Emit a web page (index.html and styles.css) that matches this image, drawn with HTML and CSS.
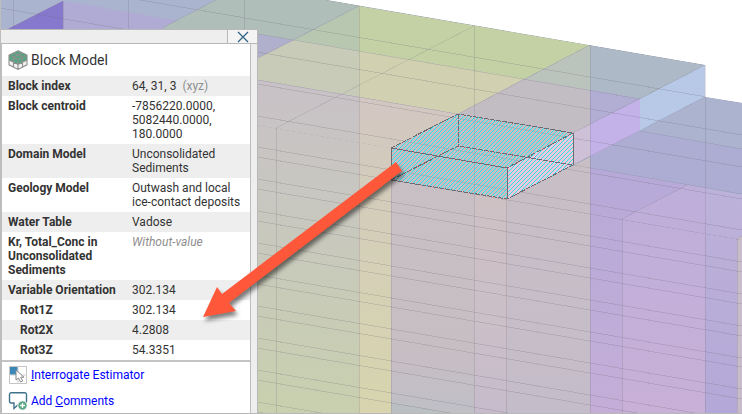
FILE: index.html
```
<!DOCTYPE html>
<html lang="en">
<head>
<meta charset="utf-8">
<meta name="viewport" content="width=device-width, initial-scale=1">
<title>Block Model</title>
<link rel="stylesheet" href="styles.css">
</head>
<body>
<main class="viewer">
<svg class="scene" viewBox="0 0 742 414" preserveAspectRatio="xMinYMin slice" aria-hidden="true">
  <defs>
    <clipPath id="model"><path d="M0-56L705 65V97L742 103V414H0Z"/></clipPath>
    <clipPath id="frontB"><path d="M0 81L506 168V199L742 240V414H0Z"/></clipPath>
    <linearGradient id="left" x1="0" y1="0" x2="0" y2="1"><stop offset="0" stop-color="#c8c1c7"/><stop offset=".35" stop-color="#c8c7c0"/><stop offset=".65" stop-color="#c8cbb8"/><stop offset="1" stop-color="#c8d0ae"/></linearGradient>
    <linearGradient id="sand" x1="0" y1="0" x2="0" y2="1"><stop offset="0" stop-color="#d2c7c2"/><stop offset=".55" stop-color="#d5d0b6"/><stop offset="1" stop-color="#d7d4ae"/></linearGradient>
    <linearGradient id="mauve" x1="0" y1="0" x2="0" y2="1"><stop offset="0" stop-color="#c9c0c6"/><stop offset=".8" stop-color="#c7bec4"/><stop offset="1" stop-color="#bfbfc6"/></linearGradient>
    <linearGradient id="rose" x1="0" y1="0" x2="0" y2="1"><stop offset="0" stop-color="#cec1c4"/><stop offset=".6" stop-color="#cbbfc8"/><stop offset="1" stop-color="#c6bbcb"/></linearGradient>
    <linearGradient id="gray" x1="0" y1="0" x2="0" y2="1"><stop offset="0" stop-color="#c8bfc5"/><stop offset="1" stop-color="#c4bcc9"/></linearGradient>
    <linearGradient id="lilac" x1="0" y1="0" x2="0" y2="1"><stop offset="0" stop-color="#b6a9d8"/><stop offset="1" stop-color="#c4aed8"/></linearGradient>
    <linearGradient id="orchid" x1="0" y1="0" x2="0" y2="1"><stop offset="0" stop-color="#beaeda"/><stop offset="1" stop-color="#c8b0d7"/></linearGradient>
    <linearGradient id="violet" x1="0" y1="0" x2="0" y2="1"><stop offset="0" stop-color="#bdb2d9"/><stop offset="1" stop-color="#b4a8d8"/></linearGradient>
    <pattern id="hatch" width="4" height="4" patternUnits="userSpaceOnUse"><path d="M0 3h1v1h-1zM1 2h1v1h-1zM2 1h1v1h-1zM3 0h1v1h-1z" fill="#2ce3ec" shape-rendering="crispEdges"/></pattern>
  </defs>
  <g clip-path="url(#model)">
    <path fill="#abb4ce" d="M0-60H742V414H0Z"/>
    <path fill="#b0abd4" d="M63 1L258 34V80H63Z"/>
    <path fill="#8678cc" d="M63 1V29H8Z"/>
    <path fill="#b0beba" d="M216 0L162 28L258 45V58L359 6V0Z"/>
    <path fill="#b0b0cc" d="M258 34L294 40L258 58Z"/>
    <path fill="#b8c8b0" d="M359 6V51L294 40Z"/>
    <path fill="#c7cbb8" d="M294 40L359 51V97L258 80V58Z"/>
    <path fill="#c4d1a5" d="M359 6L590 45L524 79L359 51Z"/>
    <path fill="#d1d1b2" d="M359 51L524 79L458 114L359 97Z"/>
    <path fill="#bac4bc" d="M590 45V90L524 79Z"/>
    <path fill="#c2bdc3" d="M524 79L590 90V124L573 133L458 114Z"/>
    <path fill="#adb9c6" d="M590 45L705 65L640 99L590 90Z"/>
    <path fill="#b1add3" d="M590 90L640 99L590 124Z"/>
    <path fill="#cec0d7" d="M573 133L590 124V156L573 165Z"/>
    <path fill="#c2b2e8" d="M590 124L640 99V131L590 157Z"/>
    <path fill="#b7c9e7" d="M640 99L705 65V97L640 131Z"/>
    <path fill="#abb3cf" d="M705 97L742 103V195L687 185L640 177V131Z"/>
    <path fill="#adadd4" d="M640 131L742 149V194L590 168V157Z"/>
    <path fill="url(#left)" d="M258 80L359 97V414H258Z"/>
    <path fill="url(#sand)" d="M359 97L458 114L391 148V414H359Z"/>
    <path fill="url(#mauve)" d="M391 148L474 116V414H391Z"/>
    <path fill="#c9bec4" d="M391 148L458 114L573 133L507 168V199L391 180Z"/>
    <path fill="url(#rose)" d="M474 193L507 199V414H474Z"/>
    <path fill="url(#gray)" d="M507 199L590 157V414H507Z"/>
    <path fill="url(#lilac)" d="M590 168L687 185L622 219V414H590Z"/>
    <path fill="url(#orchid)" d="M622 219L687 185L705 188V414H622Z"/>
    <path fill="url(#violet)" d="M705 188L742 195V236L737 239V414H705Z"/>
    <path fill="#c8bcca" d="M737 239L742 236V414H737Z"/>
    <path fill="#b8bfc2" opacity=".7" d="M391 402L455 414H391Z"/>
  </g>
  <g class="grid" shape-rendering="crispEdges">
    <path clip-path="url(#model)" d="M0-56l705 121M0-24l742 127m-742-95l742 127m-742-95l742 127m-742-95l742 127m-742-96l742 127m-742-95l742 127m-742-95l742 127m-742-95l742 127m-742-95l742 127m-742-96l742 127m-742-95l742 127m-742-95l742 127m-742-95l742 127m-742-95l742 127"/>
    <path clip-path="url(#frontB)" d="M0 81l742 127m-742-95l742 127m-742-95l742 127m-742-95l742 127m-742-95l742 127m-742-96l742 127m-742-95l742 127m-742-95l742 127m-742-95l742 127m-742-95l742 127m-742-96l742 127"/>
    <path class="soft" d="M258 34L640 99M258 80L458 114M640 131L742 149M573 165L742 194"/>
    <path d="M13 0V29M63 1V29M128 0V29M244 0V29M359 6V414M474 26V414M590 45V414M705 65V414M276 128V414M391 180V414M506 199V414M622 219V414M737 239V414"/>
    <path class="soft" d="M63 1L8 29M216 0L162 28M359 6L258 58M474 26L276 128M590 45L458 114M705 65L573 133M705 97L573 165M687 185L622 219M742 236L737 239"/>
  </g>
  <g shape-rendering="crispEdges">
    <path fill="#ebc9dd" d="M573 133V165L507 199V168Z"/>
    <path fill="url(#hatch)" d="M391 148L458 114L573 133V165L507 199L391 180Z"/>
    <path class="edge" d="M391 148V180M391 148L507 168V199M573 133V165"/>
    <path class="edge dashed" d="M391 148L458 114L573 133L507 168M458 114V146L391 180L507 199L573 165L458 146"/>
  </g>
</svg>

<section class="panel" aria-label="Block Model">
  <header class="titlebar">
    <button class="close" type="button" aria-label="Close"><svg width="12" height="12" viewBox="0 0 12 12"><path d="M1 1L11 11M11 1L1 11" fill="none" stroke="#2f6487" stroke-width="1.3"/></svg></button>
  </header>
  <div class="body">
    <div class="content">
      <h1 class="heading">
        <svg width="20" height="20" viewBox="0 0 20 20" aria-hidden="true">
          <path d="M10 .8L19 5V14.800L10 19.400L1 14.800V5Z" fill="#f2f2f2"/>
          <path d="M10 .8L19 5V10L10 14.500L1 10V5Z" fill="#58a583"/>
          <path d="M10 .8L19 5V14.800L10 19.400L1 14.800V5ZM1 5L10 9.500L19 5M10 9.500V19.400M5.500 3L14.500 7.200V17M14.500 3L5.500 7.200V17M1 10L10 14.500L19 10" fill="none" stroke="#8d8f8e" stroke-width="1.100"/>
        </svg>
        Block Model
      </h1>
      <table class="props">
        <tbody>
          <tr><th scope="row">Block index</th><td>64, 31, 3 <span class="unit">(xyz)</span></td></tr>
          <tr><th scope="row">Block centroid</th><td>-7856220.0000,<br>5082440.0000,<br>180.0000</td></tr>
          <tr><th scope="row">Domain Model</th><td>Unconsolidated<br>Sediments</td></tr>
          <tr><th scope="row">Geology Model</th><td>Outwash and local<br>ice-contact deposits</td></tr>
          <tr><th scope="row">Water Table</th><td>Vadose</td></tr>
          <tr><th scope="row">Kr, Total_Conc in<br>Unconsolidated<br>Sediments</th><td class="none">Without-value</td></tr>
          <tr><th scope="row">Variable Orientation</th><td>302.134</td></tr>
          <tr class="sub"><th scope="row">Rot1Z</th><td>302.134</td></tr>
          <tr class="sub"><th scope="row">Rot2X</th><td>4.2808</td></tr>
          <tr class="sub"><th scope="row">Rot3Z</th><td>54.3351</td></tr>
        </tbody>
      </table>
      <nav class="actions">
        <a href="#interrogate">
          <svg width="20" height="20" viewBox="0 0 20 20" aria-hidden="true"><path d="M1.500 1.500H18.500V18.500H1.500Z" fill="#fff" stroke="#c4c4c4"/><path d="M10 1V19M1 10H19" stroke="#cfcfcf"/><path d="M2 2H9.500V9.500H2Z" fill="#3b87b8"/><path d="M8 5V15L10.500 13L12.500 17L14.700 16L12.700 12.200H16Z" fill="#fff" stroke="#888"/></svg>
          <span><u>I</u>nterrogate Estimator</span>
        </a>
        <a href="#comments">
          <svg width="20" height="20" viewBox="0 0 20 20" aria-hidden="true"><path d="M3 1.700H17Q18.500 1.700 18.500 3.500V10Q18.500 12 17 12H12L6 17.500V12H3Q1.500 12 1.500 10V3.500Q1.500 1.700 3 1.700Z" fill="#fff" stroke="#3f718c" stroke-width="1.400"/><circle cx="14.500" cy="14.500" r="4.700" fill="#58a583" stroke="#fff"/><path d="M14.500 12V17M12 14.500H17" stroke="#fff" stroke-width="1.300"/></svg>
          <span>Add <u>C</u>omments</span>
        </a>
      </nav>
    </div>
  </div>
</section>

<svg class="scene pointer" viewBox="0 0 742 414" preserveAspectRatio="xMinYMin slice" aria-hidden="true">
  <path d="M396 162L402 171L229 303L236 311L203 317L217 287L222 294Z" fill="#ff573a"/>
</svg>
</main>
</body>
</html>
```
FILE: styles.css
```
* { box-sizing: border-box; }

body {
  margin: 0;
  background: #fff;
  color: #333;
  font: 12px/14px Roboto, "Liberation Sans", sans-serif;
}

.viewer {
  position: relative;
  min-height: 100vh;
  display: flex;
  align-items: flex-end;
  overflow: hidden;
  border-left: 1px solid #bdbdbd;
  border-bottom: 1px solid #b8b8b8;
}

.scene {
  position: absolute;
  inset: 0 0 0 -1px;
  width: 100vw;
  height: 100vh;
}

.pointer {
  pointer-events: none;
  filter: drop-shadow(2px 4px 2px rgba(0, 0, 0, 0.5));
}

.grid path {
  fill: none;
  stroke: #706878;
  stroke-opacity: 0.21;
}

.grid .soft { stroke-opacity: 0.16; }

.edge {
  fill: none;
  stroke: #706a70;
}

.dashed { stroke-dasharray: 5 1; }

.panel {
  position: relative;
  width: 257px;
  background: #eee;
  border-top: 1px solid #b8b8b8;
  border-right: 1px solid #b8b8b8;
}

.titlebar {
  display: flex;
  justify-content: flex-end;
  height: 14px;
  border-bottom: 1px solid #b8b8b8;
}

.close {
  display: flex;
  align-items: center;
  justify-content: center;
  width: 30px;
  padding: 0;
  border: 0;
  border-left: 1px solid #b8b8b8;
  background: #f4f4f4;
}

.body { padding-right: 6px; }

.content {
  background: #fff;
  border-left: 1px solid #bdbdbd;
  border-right: 1px solid #bdbdbd;
}

.heading {
  display: flex;
  align-items: center;
  gap: 3px;
  height: 32px;
  margin: 0;
  padding: 0 6px;
  font-size: 14px;
  font-weight: 400;
}

.props {
  width: 100%;
  border-collapse: collapse;
}

.props tr:nth-child(odd) { background: #eee; }

.props th,
.props td {
  padding: 3px 0;
  text-align: left;
  vertical-align: top;
}

.props th {
  width: 130px;
  padding-left: 6px;
  font-weight: 700;
}

.props .sub th { padding-left: 18px; }

.unit {
  margin-left: 3px;
  color: #8e8e8e;
}

.props .none {
  color: #8e8e8e;
  font-style: italic;
}

.actions {
  display: flex;
  flex-direction: column;
  gap: 6px;
  padding: 3px 6px 2px;
  border-top: 2px solid #c4c4c4;
}

.actions a {
  display: flex;
  align-items: center;
  gap: 3px;
  color: #00f;
  text-decoration: none;
}
```
